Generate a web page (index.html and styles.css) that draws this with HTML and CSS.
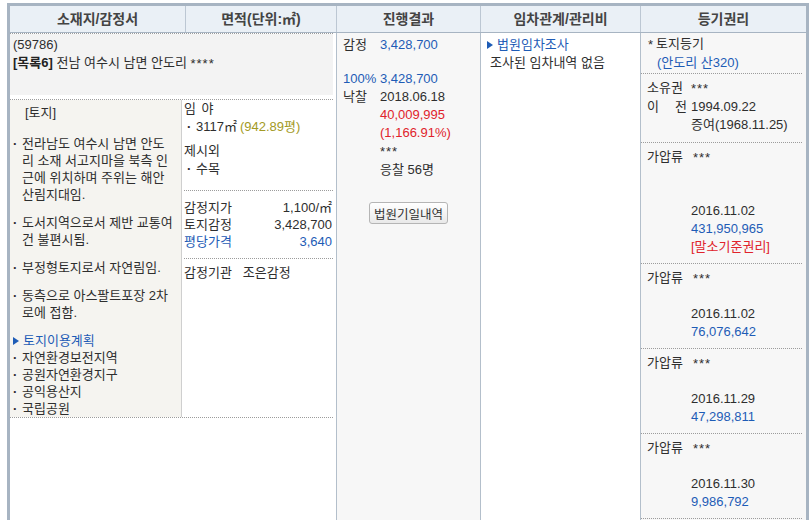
FILE: index.html
```html
<!DOCTYPE html>
<html lang="ko">
<head>
<meta charset="utf-8">
<title>물건 상세</title>
<link rel="stylesheet" href="styles.css">
</head>
<body>
<div class="board">
  <div class="head">
    <div class="hc">소재지/감정서</div>
    <div class="hc">면적(단위:㎡)</div>
    <div class="hc">진행결과</div>
    <div class="hc">임차관계/관리비</div>
    <div class="hc">등기권리</div>
  </div>
  <div class="body">
    <div class="land">
      <div class="addr">
        <div class="addr-in">
          <div>(59786)</div>
          <div><b class="lot">[목록6]</b> 전남 여수시 남면 안도리 <span class="stars">****</span></div>
        </div>
      </div>
      <div class="detail">
        <div class="desc">
          <div class="tag">[토지]</div>
          <ul class="notes">
            <li><span class="dot">·</span><span>전라남도 여수시 남면 안도<br>리 소재 서고지마을 북측 인<br>근에 위치하며 주위는 해안<br>산림지대임.</span></li>
            <li><span class="dot">·</span><span>도서지역으로서 제반 교통여<br>건 불편시됨.</span></li>
            <li><span class="dot">·</span><span>부정형토지로서 자연림임.</span></li>
            <li><span class="dot">·</span><span>동측으로 아스팔트포장 2차<br>로에 접함.</span></li>
          </ul>
          <div class="plan"><span class="tri"></span><span class="plan-t">토지이용계획</span></div>
          <ul class="plan-list">
            <li><span class="dot">·</span><span>자연환경보전지역</span></li>
            <li><span class="dot">·</span><span>공원자연환경지구</span></li>
            <li><span class="dot">·</span><span>공익용산지</span></li>
            <li><span class="dot">·</span><span>국립공원</span></li>
          </ul>
        </div>
        <div class="area">
          <div class="a1">
            <div class="wide">임 야</div>
            <div class="sq"><span class="dot2">·</span>3117㎡ <span class="olive">(942.89평)</span></div>
            <div class="gap">제시외</div>
            <div class="sq"><span class="dot2">·</span>수목</div>
          </div>
          <div class="a2">
            <div class="row"><span>감정지가</span><span>1,100/㎡</span></div>
            <div class="row"><span>토지감정</span><span>3,428,700</span></div>
            <div class="row blue"><span>평당가격</span><span>3,640</span></div>
          </div>
          <div class="a3">감정기관<span class="org">조은감정</span></div>
        </div>
      </div>
    </div>

    <div class="prog">
      <div class="kv"><span>감정</span><span class="blue">3,428,700</span></div>
      <div class="kv kv-gap">
        <span class="blue">100%</span><span class="blue">3,428,700</span>
        <span>낙찰</span><span>2018.06.18</span>
        <span></span><span class="red">40,009,995</span>
        <span></span><span class="red">(1,166.91%)</span>
        <span></span><span><span class="stars">***</span></span>
        <span></span><span>응찰 56명</span>
      </div>
      <div class="btnrow"><button class="btn" type="button">법원기일내역</button></div>
    </div>

    <div class="lease">
      <div class="title"><span class="tri"></span><span class="title-t">법원임차조사</span></div>
      <div class="sub">조사된 임차내역 없음</div>
    </div>

    <div class="reg">
      <div class="ent first">
        <div><span class="ast stars">*</span>토지등기</div>
        <div class="blue loc">(안도리 산320)</div>
      </div>
      <div class="ent own">
        <div class="kv2"><span>소유권</span><span><span class="stars">***</span></span></div>
        <div class="kv2"><span class="spread"><span>이</span><span>전</span></span><span>1994.09.22</span></div>
        <div class="kv2"><span></span><span>증여(1968.11.25)</span></div>
      </div>
      <div class="ent">
        <div class="kv2"><span>가압류</span><span class="who tall"><span class="stars">***</span></span></div>
        <div class="kv2"><span></span><span>2016.11.02</span></div>
        <div class="kv2"><span></span><span class="blue">431,950,965</span></div>
        <div class="kv2"><span></span><span class="red">[말소기준권리]</span></div>
      </div>
      <div class="ent">
        <div class="kv2"><span>가압류</span><span class="who"><span class="stars">***</span></span></div>
        <div class="kv2"><span></span><span>2016.11.02</span></div>
        <div class="kv2"><span></span><span class="blue">76,076,642</span></div>
      </div>
      <div class="ent">
        <div class="kv2"><span>가압류</span><span class="who"><span class="stars">***</span></span></div>
        <div class="kv2"><span></span><span>2016.11.29</span></div>
        <div class="kv2"><span></span><span class="blue">47,298,811</span></div>
      </div>
      <div class="ent">
        <div class="kv2"><span>가압류</span><span class="who"><span class="stars">***</span></span></div>
        <div class="kv2"><span></span><span>2016.11.30</span></div>
        <div class="kv2"><span></span><span class="blue">9,986,792</span></div>
      </div>
    </div>
  </div>
</div>
</body>
</html>
```

FILE: styles.css
```css
* { box-sizing: border-box; margin: 0; padding: 0; }
html, body { height: 520px; overflow: hidden; background: #fff; }
body {
  font-family: "Liberation Sans", "Noto Sans CJK KR", sans-serif;
  font-size: 13px;
  line-height: 18px;
  color: #2e2e2e;
}
.blue { color: #1e5cb6; }
.red { color: #e0232b; }
.olive { color: #a39a24; }
.stars { vertical-align: -1px; letter-spacing: 1px; }

.board {
  margin: 3px 0 0 7px;
  width: 802px;
  height: 517px;
  border: 3px solid #a7b4c2;
  border-bottom: 0;
  display: flex;
  flex-direction: column;
}
.head {
  display: grid;
  grid-template-columns: 175px 151px 144px 160px 166px;
  height: 27px;
  flex: none;
  background: #eaf0f6;
  border-bottom: 1px solid #a7b4c2;
}
.hc {
  display: flex;
  align-items: center;
  justify-content: center;
  font-size: 14px;
  font-weight: bold;
  color: #444;
}
.hc + .hc { border-left: 1px solid #bcc7d3; }

.body {
  flex: 1;
  display: grid;
  grid-template-columns: 326px 144px 160px 166px;
}

/* column 1 + 2 */
.land { padding-right: 3px; }
.addr { border-top: 1px dotted #9c9c9c; }
.addr-in {
  background: #f3f3f3;
  height: 61px;
  margin-bottom: 4px;
  padding: 2px 0 0 3px;
  white-space: nowrap;
}
.lot { font-weight: bold; color: #222; }
.detail {
  display: flex;
  border-top: 1px dotted #9c9c9c;
  border-bottom: 1px dotted #9c9c9c;
}
.desc {
  width: 172px;
  flex: none;
  background: #f5f4f0;
  border-right: 1px solid #cfcfcf;
  padding: 4px 0 0 2px;
  line-height: 17px;
}
.tag { padding-left: 13px; }
.notes { list-style: none; margin-top: 14px; }
.notes li { display: flex; white-space: nowrap; }
.notes li + li { margin-top: 11px; }
.dot { width: 10px; flex: none; padding-left: 1px; font-weight: bold; }
.plan { display: flex; align-items: center; margin-top: 11px; color: #1e5cb6; }
.plan .tri { margin-left: 1px; }
.plan-t { margin-left: 4px; }
.plan-list { list-style: none; }
.plan-list li { display: flex; white-space: nowrap; }
.tri {
  display: inline-block;
  width: 0;
  height: 0;
  border-left: 6px solid #1e5cb6;
  border-top: 4.5px solid transparent;
  border-bottom: 4.5px solid transparent;
}

.area { flex: 1; padding-left: 2px; white-space: nowrap; }
.a1 {
  line-height: 18px;
  padding-bottom: 12px;
  border-bottom: 1px dotted #9c9c9c;
}
.wide { word-spacing: 2px; }
.a1 .gap { margin-top: 6px; }
.sq { display: flex; }
.dot2 { width: 12px; padding-left: 3px; flex: none; font-weight: bold; }
.sq .olive { margin-left: 3px; }
.a2 {
  line-height: 17px;
  padding: 8px 1px 8px 0;
  border-bottom: 1px dotted #9c9c9c;
}
.row { display: flex; justify-content: space-between; }
.a3 { line-height: 17px; padding-top: 5px; }
.org { margin-left: 11px; }

/* column 3 */
.prog {
  border-left: 1px solid #b3bfcb;
  background: #f7f7f7;
  padding: 3px 0 0 6px;
  white-space: nowrap;
}
.kv { display: grid; grid-template-columns: 37px auto; line-height: 18px; }
.kv-gap { margin-top: 16px; }
.btnrow { margin: 23px 0 0 -6px; text-align: center; }
.btn {
  font-family: inherit;
  font-size: 12.5px;
  color: #333;
  height: 22px;
  padding: 0 4px;
  border: 1px solid #b5b5b5;
  border-radius: 3px;
  background: linear-gradient(#ffffff, #e9e9e9);
}

/* column 4 */
.lease {
  border-left: 1px solid #b3bfcb;
  background: #fff;
  padding: 3px 0 0 6px;
  white-space: nowrap;
}
.title { display: flex; align-items: center; color: #1e5cb6; }
.title-t { margin-left: 4px; }
.sub { padding-left: 3px; }

/* column 5 */
.reg {
  border-left: 1px solid #b3bfcb;
  background: #f7f7f7;
  padding-right: 4px;
  white-space: nowrap;
}
.ent {
  padding: 5px 0 7px 6px;
  border-bottom: 1px dotted #9c9c9c;
}
.ent.first { padding-top: 2px; padding-bottom: 1px; }
.ent.own { padding-bottom: 8px; }
.ast { display: inline-block; width: 9px; padding-left: 1px; }
.loc { padding-left: 10px; }
.kv2 { display: grid; grid-template-columns: 44px auto; }
.spread { display: flex; justify-content: space-between; padding-right: 4px; }
.who { padding-left: 2px; height: 36px; }
.who.tall { height: 54px; }
```
